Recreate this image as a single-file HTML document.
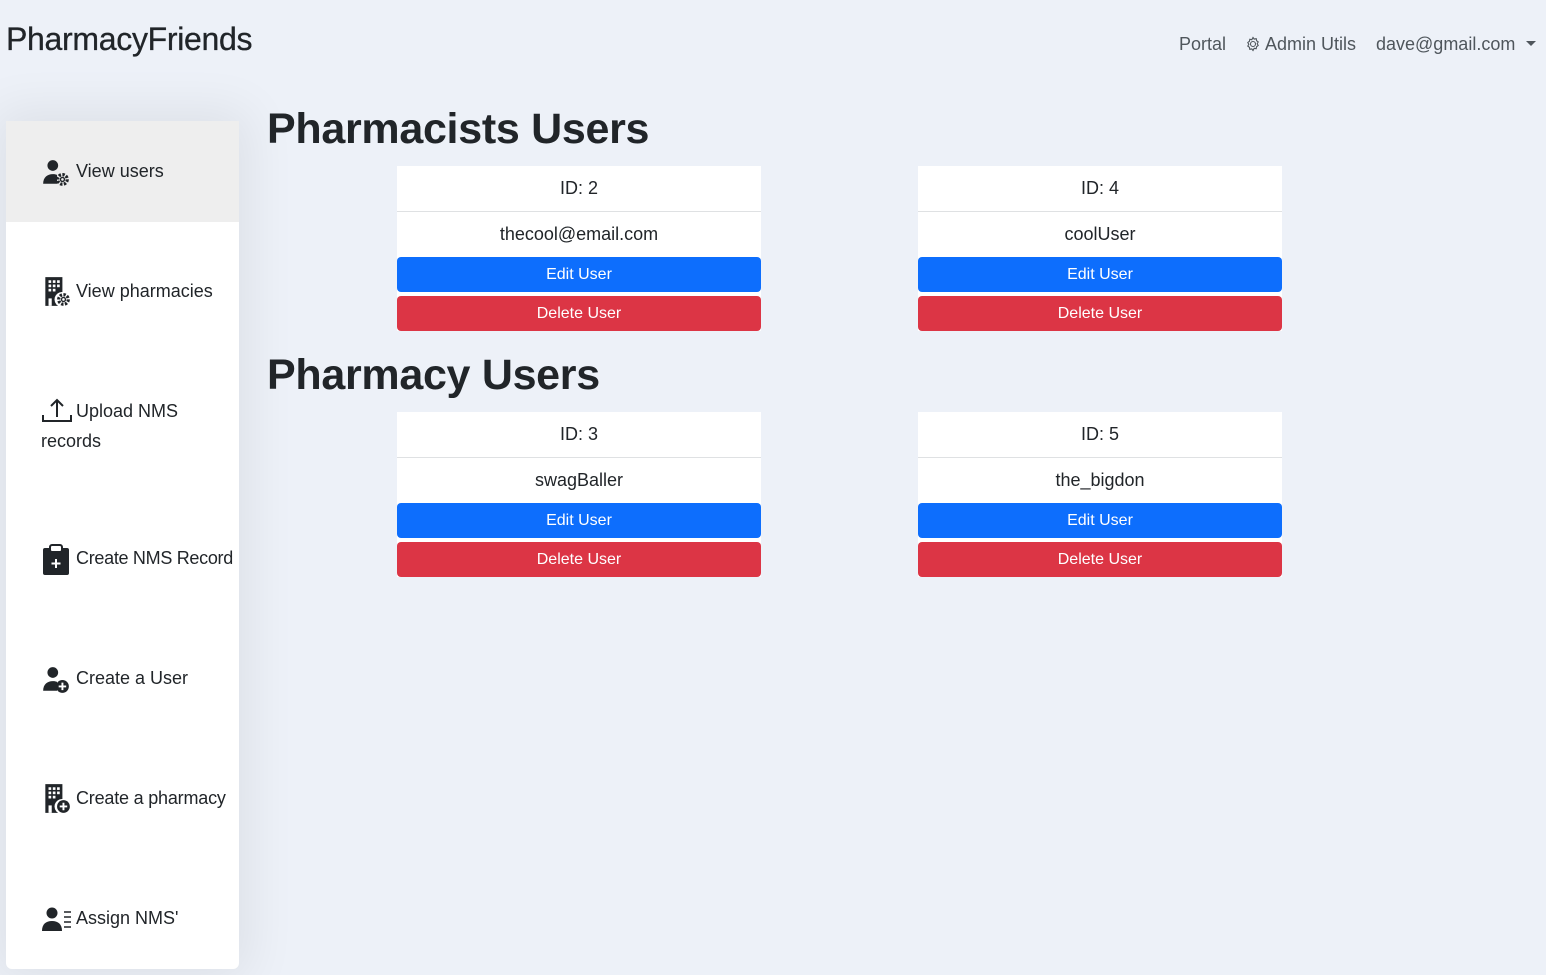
<!DOCTYPE html>
<html><head><meta charset="utf-8"><style>
*{box-sizing:border-box;margin:0;padding:0}
body{width:1546px;height:975px;background:#edf1f8;font-family:"Liberation Sans",sans-serif;color:#212529;position:relative;overflow:hidden}
.brand{position:absolute;left:6px;top:21px;font-size:32px;letter-spacing:-0.3px;-webkit-text-stroke:0.3px #212529}
.nav{position:absolute;top:34px;font-size:18px;color:#4f565c}
.side{position:absolute;left:6px;top:121px;width:233px;height:848px;background:#fff;border-radius:0 0 6px 6px;box-shadow:0 0 50px 10px rgba(0,0,0,0.07)}
.item{position:absolute;left:0;width:233px;font-size:18px;line-height:30px;padding-left:35px;text-indent:35px;white-space:normal}
.item svg{position:absolute;left:35px}
.act{background:#eeeeee;top:0;height:101px;padding-top:35px}
h1{position:absolute;left:267px;font-size:43px;font-weight:bold;letter-spacing:-0.3px}
.card{position:absolute;width:364px;background:#fff;text-align:center;font-size:18px}
.hd{height:46px;line-height:45px;border-bottom:1px solid #dfe1e3}
.bd{height:45px;line-height:45px}
.btn{height:35px;line-height:35px;color:#fff;font-size:16px;border-radius:4px}
.e{background:#0d6efd}.d{background:#dc3545;margin-top:4px}
</style></head><body>
<div class="brand">PharmacyFriends</div>
<div class="nav" style="left:1179px">Portal</div>
<div class="nav" style="left:1245px"><svg width="16" height="16" viewBox="0 0 16 16" style="vertical-align:-2px"><circle cx="8" cy="8" r="2.5" fill="none" stroke="#4f565c" stroke-width="1.1"/><path d="M8 1.5l1.2 1.6 2-.4.4 2 1.6 1.2-1 1.8 1 1.8-1.6 1.2-.4 2-2-.4L8 14.5 6.8 12.9l-2 .4-.4-2L2.8 10.1l1-1.8-1-1.8 1.6-1.2.4-2 2 .4z" fill="none" stroke="#4f565c" stroke-width="1.1"/></svg> Admin Utils</div>
<div class="nav" style="left:1376px">dave@gmail.com <span style="display:inline-block;border-left:5px solid transparent;border-right:5px solid transparent;border-top:5px solid #4f565c;vertical-align:4px;margin-left:6px"></span></div>

<div class="side">
<div class="item act"><svg width="30" height="30" viewBox="0 0 28 28" style="top:37px"><circle cx="11" cy="7" r="5" fill="#212529"/><path d="M2 24c0-6 4-9 9-9 2 0 3 .3 4 .8V24z" fill="#212529"/><circle cx="20" cy="20" r="4.5" fill="none" stroke="#212529" stroke-width="3" stroke-dasharray="2.2 1.3"/><circle cx="20" cy="20" r="2.5" fill="#212529"/><circle cx="20" cy="20" r="1.2" fill="#eee"/></svg>View users</div>
<div class="item" style="top:155px"><svg width="30" height="32" viewBox="0 0 28 30" style="top:0px"><path d="M4 1h16v14a7 7 0 0 0-4 13H4z" fill="#212529"/><g fill="#fff"><rect x="7" y="4" width="2.5" height="2.5"/><rect x="11" y="4" width="2.5" height="2.5"/><rect x="15" y="4" width="2.5" height="2.5"/><rect x="7" y="8" width="2.5" height="2.5"/><rect x="11" y="8" width="2.5" height="2.5"/><rect x="15" y="8" width="2.5" height="2.5"/><rect x="7" y="12" width="2.5" height="2.5"/><rect x="11" y="12" width="2.5" height="2.5"/><rect x="7" y="21" width="3" height="7"/></g><circle cx="21" cy="22" r="4.5" fill="none" stroke="#212529" stroke-width="3" stroke-dasharray="2.2 1.3"/><circle cx="21" cy="22" r="2.5" fill="#212529"/><circle cx="21" cy="22" r="1.2" fill="#fff"/></svg>View pharmacies</div>
<div class="item" style="top:275px;width:200px"><svg width="32" height="28" viewBox="0 0 32 28" style="top:1px"><path d="M2 18v6h28v-6M16 20V3M10 9l6-6 6 6" fill="none" stroke="#212529" stroke-width="2"/></svg>Upload NMS records</div>
<div class="item" style="top:422px;letter-spacing:-0.3px"><svg width="28" height="32" viewBox="0 0 28 32" style="top:1px"><rect x="2" y="4" width="26" height="27" rx="2" fill="#212529"/><rect x="9" y="1" width="12" height="7" rx="2" fill="#fff" stroke="#212529" stroke-width="2"/><path d="M15 15v9M10.5 19.5h9" stroke="#fff" stroke-width="2"/></svg>Create NMS Record</div>
<div class="item" style="top:542px"><svg width="30" height="30" viewBox="0 0 28 28" style="top:2px"><circle cx="11" cy="7" r="5" fill="#212529"/><path d="M2 24c0-6 4-9 9-9 2 0 3 .3 4 .8V24z" fill="#212529"/><circle cx="20" cy="20" r="6" fill="#212529"/><path d="M20 16.5v7M16.5 20h7" stroke="#fff" stroke-width="1.8"/></svg>Create a User</div>
<div class="item" style="top:662px;letter-spacing:-0.2px"><svg width="30" height="32" viewBox="0 0 28 30" style="top:0px"><path d="M4 1h16v14a7 7 0 0 0-4 13H4z" fill="#212529"/><g fill="#fff"><rect x="7" y="4" width="2.5" height="2.5"/><rect x="11" y="4" width="2.5" height="2.5"/><rect x="15" y="4" width="2.5" height="2.5"/><rect x="7" y="8" width="2.5" height="2.5"/><rect x="11" y="8" width="2.5" height="2.5"/><rect x="15" y="8" width="2.5" height="2.5"/><rect x="7" y="12" width="2.5" height="2.5"/><rect x="11" y="12" width="2.5" height="2.5"/><rect x="7" y="21" width="3" height="7"/></g><circle cx="21" cy="22" r="6" fill="#212529"/><path d="M21 18.5v7M17.5 22h7" stroke="#fff" stroke-width="1.8"/></svg>Create a pharmacy</div>
<div class="item" style="top:782px"><svg width="32" height="28" viewBox="0 0 32 28" style="top:2px"><circle cx="11" cy="8" r="5.5" fill="#212529"/><path d="M1 26c0-7 4-10 10-10s10 3 10 10z" fill="#212529"/><path d="M23 7h7M23 12h7M23 17h7M23 22h7" stroke="#212529" stroke-width="1.6"/></svg>Assign NMS'</div>
</div>

<h1 style="top:105px">Pharmacists Users</h1>
<h1 style="top:351px">Pharmacy Users</h1>

<div class="card" style="left:397px;top:166px"><div class="hd">ID: 2</div><div class="bd">thecool@email.com</div><div class="btn e">Edit User</div><div class="btn d">Delete User</div></div>
<div class="card" style="left:918px;top:166px"><div class="hd">ID: 4</div><div class="bd">coolUser</div><div class="btn e">Edit User</div><div class="btn d">Delete User</div></div>
<div class="card" style="left:397px;top:412px"><div class="hd">ID: 3</div><div class="bd">swagBaller</div><div class="btn e">Edit User</div><div class="btn d">Delete User</div></div>
<div class="card" style="left:918px;top:412px"><div class="hd">ID: 5</div><div class="bd">the_bigdon</div><div class="btn e">Edit User</div><div class="btn d">Delete User</div></div>
</body></html>
